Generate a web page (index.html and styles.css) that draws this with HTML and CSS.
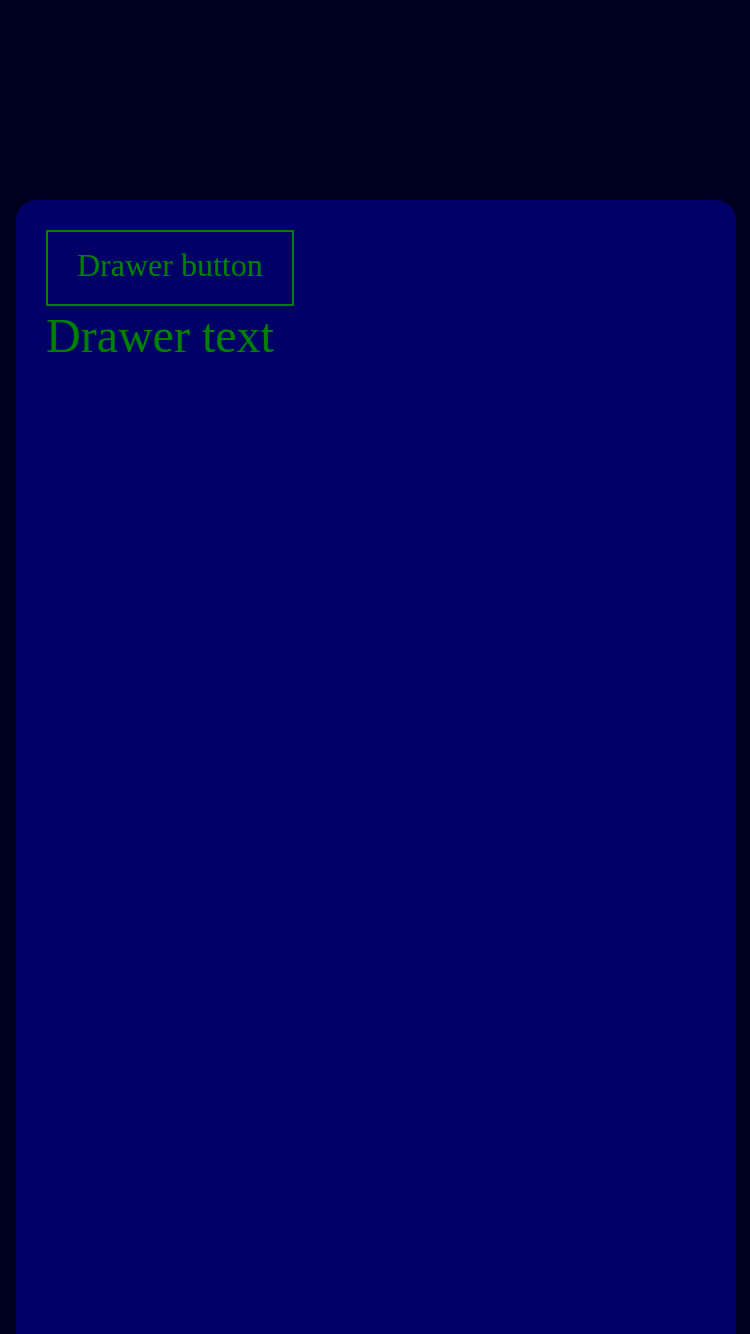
FILE: index.html
```html
<!DOCTYPE html>
<html>
<head>
<meta charset="utf-8">
<link rel="stylesheet" href="styles.css">
</head>
<body>
<div class="page">
  <div class="drawer">
    <button class="drawer-button">Drawer button</button>
    <div class="drawer-text">Drawer text</div>
  </div>
</div>
</body>
</html>
```

FILE: styles.css
```css
html, body {
  margin: 0;
  padding: 0;
  background: #000020;
  height: 100%;
}
.page {
  height: 1334px;
  display: flex;
  flex-direction: column;
  padding: 200px 14px 0 16px;
  box-sizing: border-box;
  overflow: hidden;
}
.drawer {
  flex: 1;
  background: #000066;
  border-radius: 20px 20px 0 0;
  padding: 30px;
  display: flex;
  flex-direction: column;
  align-items: flex-start;
}
.drawer-button {
  font-family: "Liberation Serif", serif;
  font-size: 32px;
  color: #008000;
  background: transparent;
  border: 2px solid #008000;
  padding: 0 29px 6px;
  height: 76px;
  line-height: 36px;
  margin: 0;
}
.drawer-text {
  font-family: "Liberation Serif", serif;
  font-size: 48px;
  color: #008000;
  line-height: 55px;
  margin-top: 2px;
}
```
